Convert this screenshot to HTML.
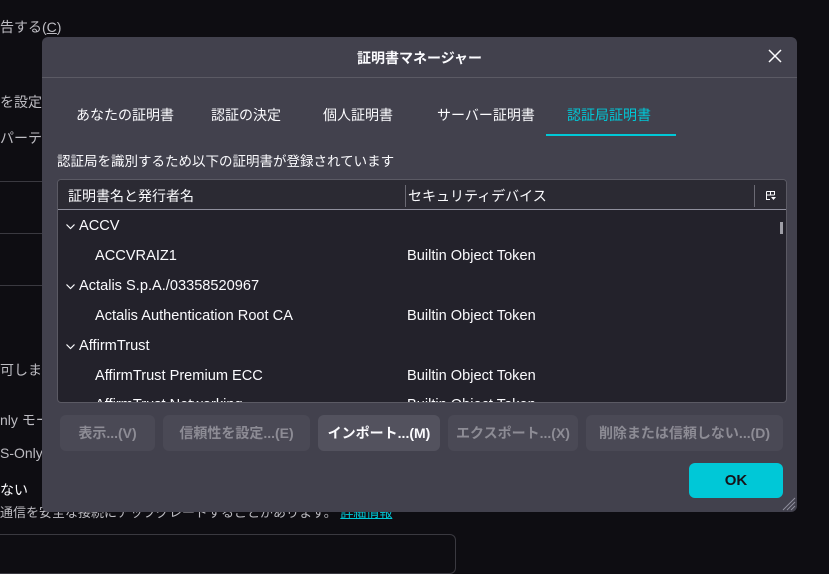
<!DOCTYPE html>
<html><head><meta charset="utf-8"><style>
*{margin:0;padding:0;box-sizing:border-box}
html,body{width:829px;height:560px}
body{background:#0e0d12;position:relative;overflow:hidden;font-family:"Liberation Sans","Noto Sans CJK JP",sans-serif;color:#fbfbfe;font-size:14px}
.a{position:absolute;white-space:nowrap}
.bg{color:#bdbcc2;font-size:14px}
.dlg{position:absolute;left:42px;top:37px;width:755px;height:475px;background:#42414d;border-radius:6px}
.tab{position:absolute;top:105px;font-size:14px}
.tree{position:absolute;left:57px;top:179px;width:730px;height:224px;background:#23222b;border:1px solid #5b5a64;border-radius:4px;overflow:hidden;font-size:14.6px}
.hd{position:absolute;left:0;top:0;width:100%;height:30px;background:#2b2a33;border-bottom:1px solid #8f8f9d;font-size:14px}
.btn{position:absolute;top:415px;height:36px;border-radius:6px;background:#4a4955;color:#8d8c95;font-weight:bold;font-size:14px;text-align:center;line-height:36px}
.cv{position:absolute;left:8px}
</style></head><body>
<div class="a bg" style="left:0;top:17px">告する(<u>C</u>)</div>
<div class="a bg" style="left:0;top:92px">を設定し</div>
<div class="a bg" style="left:0;top:128px">パーティの</div>
<div class="a" style="left:0;top:181px;width:42px;border-top:1px solid #3a3940"></div>
<div class="a" style="left:0;top:233px;width:42px;border-top:1px solid #3a3940"></div>
<div class="a" style="left:0;top:285px;width:42px;border-top:1px solid #3a3940"></div>
<div class="a bg" style="left:0;top:360px">可します</div>
<div class="a bg" style="left:0;top:410px">nly モード</div>
<div class="a bg" style="left:0;top:445px">S-Only</div>
<div class="a" style="left:0;top:480px;color:#fbfbfe">ない</div>
<div class="a bg" style="left:0;top:502px;font-size:13px">通信を安全な接続にアップグレードすることがあります。 <span style="color:#00c8d7;text-decoration:underline">詳細情報</span></div>
<div class="a" style="left:-10px;top:534px;width:466px;height:40px;border:1px solid #3a3940;border-radius:6px"></div>

<div class="dlg">
<div class="a" style="left:0;top:40px;width:755px;border-top:1px solid #5b5a64"></div>
<div class="a" style="left:0;width:755px;top:11px;text-align:center;font-size:14px;font-weight:bold">証明書マネージャー</div>
<svg class="a" style="left:726px;top:12px" width="14" height="14"><path d="M1 1L13 13M13 1L1 13" stroke="#fbfbfe" stroke-width="1.5"/></svg>
</div>
<div class="tab" style="left:76px">あなたの証明書</div>
<div class="tab" style="left:211px">認証の決定</div>
<div class="tab" style="left:323px">個人証明書</div>
<div class="tab" style="left:437px">サーバー証明書</div>
<div class="tab" style="left:567px;color:#00c8d7">認証局証明書</div>
<div class="a" style="left:546px;top:134px;width:130px;height:2px;background:#00c8d7"></div>
<div class="a" style="left:57px;top:150px;font-size:13.5px">認証局を識別するため以下の証明書が登録されています</div>
<div class="tree">
<div class="hd"></div>
<div class="a" style="left:10px;top:6px;font-size:14px">証明書名と発行者名</div>
<div class="a" style="left:347px;top:5px;height:22px;border-left:1px solid #6b6a74"></div>
<div class="a" style="left:350px;top:6px;font-size:14px">セキュリティデバイス</div>
<div class="a" style="left:696px;top:5px;height:22px;border-left:1px solid #6b6a74"></div>
<svg class="a" style="left:708px;top:11px" width="11" height="10"><path d="M0.5 0.5H8.5V4M0.5 0.5V8.5H4M0.5 4H8.5M4.5 0.5V4" stroke="#fbfbfe" fill="none"/><path d="M5 6H10L7.5 9Z" fill="#fbfbfe"/></svg>
<div class="a" style="left:722px;top:42px;width:3px;height:12px;background:#9e9ea6"></div>
<svg class="cv" style="top:44px" width="9" height="6"><path d="M0.5 0.5L4.5 4.5L8.5 0.5" stroke="#fbfbfe" fill="none" stroke-width="1.2"/></svg>
<svg class="cv" style="top:104px" width="9" height="6"><path d="M0.5 0.5L4.5 4.5L8.5 0.5" stroke="#fbfbfe" fill="none" stroke-width="1.2"/></svg>
<svg class="cv" style="top:164px" width="9" height="6"><path d="M0.5 0.5L4.5 4.5L8.5 0.5" stroke="#fbfbfe" fill="none" stroke-width="1.2"/></svg>
<div class="a" style="left:21px;top:38px">ACCV</div>
<div class="a" style="left:37px;top:68px">ACCVRAIZ1</div><div class="a" style="left:349px;top:68px">Builtin Object Token</div>
<div class="a" style="left:21px;top:98px">Actalis S.p.A./03358520967</div>
<div class="a" style="left:37px;top:128px">Actalis Authentication Root CA</div><div class="a" style="left:349px;top:128px">Builtin Object Token</div>
<div class="a" style="left:21px;top:158px">AffirmTrust</div>
<div class="a" style="left:37px;top:188px">AffirmTrust Premium ECC</div><div class="a" style="left:349px;top:188px">Builtin Object Token</div>
<div class="a" style="left:37px;top:217px">AffirmTrust Networking</div><div class="a" style="left:349px;top:217px">Builtin Object Token</div>
</div>
<div class="btn" style="left:60px;width:95px">表示...(V)</div>
<div class="btn" style="left:163px;width:147px">信頼性を設定...(E)</div>
<div class="btn" style="left:318px;width:122px;background:#53525e;color:#fbfbfe">インポート...(M)</div>
<div class="btn" style="left:448px;width:130px">エクスポート...(X)</div>
<div class="btn" style="left:586px;width:197px">削除または信頼しない...(D)</div>
<div class="a" style="left:689px;top:463px;width:94px;height:35px;background:#00c8d7;border-radius:6px;color:#15141a;font-weight:bold;text-align:center;line-height:35px;font-size:15px">OK</div>
<svg class="a" style="left:782px;top:497px" width="14" height="14"><path d="M13 1L1 13M13 5L5 13M13 9L9 13" stroke="#8f8f9d"/></svg>
</body></html>
